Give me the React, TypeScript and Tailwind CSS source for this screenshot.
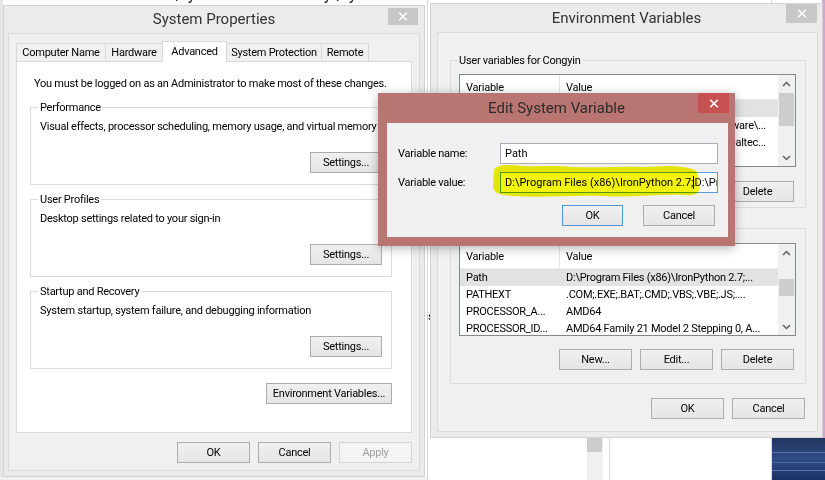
import type { ReactNode } from "react";

type Row = { name: string; value: string; tail?: boolean };

const userRows: Row[] = [
  { name: "PATH", value: "C:\\Python27\\Scripts" },
  { name: "TEMP", value: "%USERPROFILE%\\AppData\\Local\\Software\\...", tail: true },
  { name: "TMP", value: "C:\\Users\\Congyin\\AppData\\Local\\Realtec...", tail: true },
];

const systemRows: Row[] = [
  { name: "Path", value: "D:\\Program Files (x86)\\IronPython 2.7;..." },
  { name: "PATHEXT", value: ".COM;.EXE;.BAT;.CMD;.VBS;.VBE;.JS;...." },
  { name: "PROCESSOR_A...", value: "AMD64" },
  { name: "PROCESSOR_ID...", value: "AMD64 Family 21 Model 2 Stepping 0, A..." },
];

function Btn({
  children,
  className = "",
  disabled,
  focused,
}: {
  children: ReactNode;
  className?: string;
  disabled?: boolean;
  focused?: boolean;
}) {
  const tone = disabled
    ? "border-[#d5d5d5] bg-[#f4f4f4] text-[#a0a0a0]"
    : focused
      ? "border-[#4a94e0] bg-linear-to-b from-[#f0f0f0] to-[#e5e5e5]"
      : "border-[#acacac] bg-linear-to-b from-[#f0f0f0] to-[#e5e5e5]";

  return (
    <div
      className={`flex h-[21px] shrink-0 items-center justify-center border ${tone} ${className}`}
    >
      {children}
    </div>
  );
}

function CloseIcon() {
  return (
    <svg width="10" height="9" viewBox="0 0 10 9">
      <path
        d="M1.2 0.8 L8.8 8.2 M8.8 0.8 L1.2 8.2"
        stroke="#fff"
        strokeWidth="1.6"
      />
    </svg>
  );
}

function Chevron({ up }: { up?: boolean }) {
  return (
    <svg width="9" height="6" viewBox="0 0 9 6">
      <polyline
        points={up ? "1,5 4.5,1.5 8,5" : "1,1 4.5,4.5 8,1"}
        fill="none"
        stroke="#606060"
        strokeWidth="1.5"
      />
    </svg>
  );
}

function ScrollBar({ thumb }: { thumb: string }) {
  return (
    <div className="flex w-[17px] shrink-0 flex-col bg-[#f0f0f0]">
      <div className="flex h-[17px] items-center justify-center">
        <Chevron up />
      </div>
      <div className="flex-1">
        <div className={`mx-px bg-[#cdcdcd] ${thumb}`} />
      </div>
      <div className="flex h-[17px] items-center justify-center">
        <Chevron />
      </div>
    </div>
  );
}

function VarList({
  rows,
  selected,
  thumb,
}: {
  rows: Row[];
  selected: number;
  thumb: string;
}) {
  return (
    <div className="ml-[8px] flex h-[93px] w-[337px] border border-[#828790] bg-white">
      <div className="flex min-w-0 flex-1 flex-col overflow-hidden">
        <div className="flex h-[25px] shrink-0 border-b border-[#ececec]">
          <div className="flex w-[100px] items-center border-r border-[#e5e5e5] pl-[6px]">
            Variable
          </div>
          <div className="flex items-center pl-[6px]">Value</div>
        </div>

        {rows.map((row, i) => (
          <div
            key={row.name}
            className={`flex h-[17px] shrink-0 items-center ${
              i === selected ? "bg-[#e2e2e2]" : ""
            }`}
          >
            <div className="w-[100px] shrink-0 overflow-hidden whitespace-nowrap pl-[6px]">
              {row.name}
            </div>
            <div
              className={`flex min-w-0 flex-1 overflow-hidden whitespace-nowrap pl-[6px] ${
                row.tail ? "justify-end pr-[12px]" : ""
              }`}
            >
              <span className="shrink-0">{row.value}</span>
            </div>
          </div>
        ))}
      </div>
      <ScrollBar thumb={thumb} />
    </div>
  );
}

function Group({ label, text }: { label: string; text: string }) {
  return (
    <div className="relative flex h-[78px] w-[362px] flex-col border border-[#dcdcdc]">
      <span className="absolute -top-[8px] left-[7px] bg-white px-[2px]">
        {label}
      </span>
      <p className="whitespace-nowrap pl-[9px] pt-[11px]">{text}</p>
      <Btn className="mr-[9px] mt-[18px] w-[72px] self-end">Settings...</Btn>
    </div>
  );
}

function SystemProperties() {
  const tabs = [
    { label: "Computer Name", w: "w-[90px]" },
    { label: "Hardware", w: "w-[58px]" },
    { label: "Advanced", w: "w-[65px]", active: true },
    { label: "System Protection", w: "w-[96px]" },
    { label: "Remote", w: "w-[48px]" },
  ];

  return (
    <div className="absolute left-[3px] top-[5px] flex h-[472px] w-[422px] flex-col border border-[#d3d3d3] bg-[#ebebeb]">
      <div className="relative flex h-[27px] items-center justify-center text-[15px] tracking-normal text-[#333]">
        System Properties
        <div className="absolute right-[6px] top-[2px] flex h-[17px] w-[30px] items-center justify-center bg-[#c7c7c7]">
          <CloseIcon />
        </div>
      </div>

      <div className="ml-[4px] h-[438px] w-[412px] border border-[#dadada] bg-[#f0f0f0] pl-[7px] pt-[7px]">
        <div className="flex h-[20px] items-end">
          {tabs.map((tab, i) => (
            <div
              key={tab.label}
              className={`flex items-center justify-center border border-b-0 border-[#d9d9d9] ${tab.w} ${
                i > 0 ? "-ml-px" : ""
              } ${
                tab.active
                  ? "relative z-10 -mb-px h-[21px] bg-white pb-[2px]"
                  : "h-[18px] bg-[#f0f0f0]"
              }`}
            >
              {tab.label}
            </div>
          ))}
        </div>

        <div className="flex h-[372px] w-[396px] flex-col border border-[#d9d9d9] bg-white pl-[13px] pt-[14px]">
          <p className="pl-[4px]">
            You must be logged on as an Administrator to make most of these
            changes.
          </p>

          <div className="mt-[16px] flex flex-col gap-[14px]">
            <Group
              label="Performance"
              text="Visual effects, processor scheduling, memory usage, and virtual memory"
            />
            <Group
              label="User Profiles"
              text="Desktop settings related to your sign-in"
            />
            <Group
              label="Startup and Recovery"
              text="System startup, system failure, and debugging information"
            />
          </div>

          <div className="mt-[14px] flex w-[362px] justify-end">
            <Btn className="w-[126px]">Environment Variables...</Btn>
          </div>
        </div>

        <div className="mt-[9px] flex w-[396px] justify-end gap-[8px]">
          <Btn className="w-[73px]">OK</Btn>
          <Btn className="w-[73px]">Cancel</Btn>
          <Btn className="w-[73px]" disabled>
            Apply
          </Btn>
        </div>
      </div>
    </div>
  );
}

function EnvironmentVariables() {
  return (
    <div className="absolute left-[430px] top-[3px] flex h-[435px] w-[393px] flex-col border border-[#d3d3d3] bg-[#ebebeb]">
      <div className="relative flex h-[28px] items-center justify-center text-[15px] tracking-normal text-[#333]">
        Environment Variables
        <div className="absolute right-[5px] top-0 flex h-[19px] w-[31px] items-center justify-center bg-[#c7c7c7]">
          <CloseIcon />
        </div>
      </div>

      <div className="ml-[6px] h-[400px] w-[381px] border border-[#dadada] bg-[#f0f0f0]">
        <div className="relative ml-[12px] mt-[27px] h-[148px] w-[356px] border border-[#dcdcdc]">
          <span className="absolute -top-[8px] left-[6px] bg-[#f0f0f0] px-[2px]">
            User variables for Congyin
          </span>
          <div className="pt-[13px]">
            <VarList rows={userRows} selected={0} thumb="mt-px h-[33px]" />
          </div>
          <div className="ml-[8px] mt-[14px] flex w-[337px] justify-end gap-[8px] pr-[2px]">
            <Btn className="w-[73px]">New...</Btn>
            <Btn className="w-[73px]">Edit...</Btn>
            <Btn className="w-[73px]">Delete</Btn>
          </div>
        </div>

        <div className="relative ml-[12px] mt-[20px] h-[156px] w-[356px] border border-[#dcdcdc]">
          <span className="absolute -top-[8px] left-[6px] bg-[#f0f0f0] px-[2px]">
            System variables
          </span>
          <div className="pt-[14px]">
            <VarList rows={systemRows} selected={0} thumb="mt-[18px] h-[17px]" />
          </div>
          <div className="ml-[8px] mt-[13px] flex w-[337px] justify-end gap-[8px] pr-[2px]">
            <Btn className="w-[73px]">New...</Btn>
            <Btn className="w-[73px]">Edit...</Btn>
            <Btn className="w-[73px]">Delete</Btn>
          </div>
        </div>

        <div className="mt-[14px] flex justify-end gap-[8px] pr-[12px]">
          <Btn className="w-[73px]">OK</Btn>
          <Btn className="w-[73px]">Cancel</Btn>
        </div>
      </div>
    </div>
  );
}

function EditSystemVariable() {
  return (
    <div className="absolute left-[378px] top-[93px] z-20 flex h-[153px] w-[357px] flex-col bg-[#b97572] shadow-[0_2px_10px_rgba(0,0,0,0.3)]">
      <div className="relative flex h-[30px] items-center justify-center text-[15px] tracking-normal text-[#2b2b2b]">
        Edit System Variable
        <div className="absolute right-[6px] top-0 flex h-[20px] w-[31px] items-center justify-center bg-[#c75050]">
          <CloseIcon />
        </div>
      </div>

      <div className="ml-[9px] h-[114px] w-[341px] bg-[#f0f0f0]">
        <div className="grid grid-cols-[102px_218px] gap-y-[8px] pl-[11px] pt-[20px]">
          <div className="flex h-[21px] items-center">Variable name:</div>
          <div className="flex h-[21px] items-center border border-[#abadb3] bg-white pl-[4px] tracking-normal">
            Path
          </div>
          <div className="flex h-[21px] items-center">Variable value:</div>
          <div className="flex h-[21px] items-center overflow-hidden whitespace-nowrap border border-[#569de5] bg-white pl-[4px] tracking-normal">
            <span className="shrink-0">D:\Program Files (x86)\IronPython 2.7;</span>
            <span className="h-[13px] w-px shrink-0 bg-black" />
            <span className="shrink-0">D:\Program Files (x86)\Python</span>
          </div>
        </div>

        <div className="mt-[12px] flex justify-end gap-[20px] pr-[13px]">
          <Btn className="w-[61px]" focused>
            OK
          </Btn>
          <Btn className="w-[72px]">Cancel</Btn>
        </div>
      </div>
    </div>
  );
}

function Highlight() {
  return (
    <svg
      className="absolute left-[492px] top-[164px] z-30 mix-blend-multiply"
      width="212"
      height="35"
      viewBox="0 0 212 35"
    >
      <path
        d="M2 6 C4 1, 14 0, 30 2 C48 3, 60 1, 80 3 C110 4, 130 2, 150 3 C165 3, 175 1, 190 3 C200 4, 205 6, 206 11 L207 25 C207 30, 201 32, 192 31 C165 30, 140 34, 110 32 C80 31, 50 34, 22 32 C8 31, 2 30, 1 22 Z"
        fill="#f4f40a"
      />
    </svg>
  );
}

export default function App() {
  return (
    <div className="relative h-[480px] w-[825px] overflow-hidden bg-white text-[11px] leading-[15px] tracking-[-0.25px] text-black [font-family:Roboto,sans-serif]">
      {/* windows behind */}
      <div className="absolute -top-[13px] left-[69px] whitespace-nowrap text-[17px] tracking-normal text-[#222]">
        Control Panel\System and Security\System
      </div>
      <div className="absolute bottom-0 left-0 top-0 w-[3px] bg-[#e6e6e6]" />
      <div className="absolute bottom-0 left-0 h-[3px] w-[427px] bg-[#f0f0f0]" />
      <div className="absolute bottom-0 left-[427px] top-0 w-px bg-[#dadada]" />
      <span className="absolute left-[428px] top-[309px] text-[11px]">s</span>
      <div className="absolute bottom-0 left-[587px] top-[438px] w-[16px] bg-[#f0f0f0]">
        <div className="h-[14px] w-[15px] bg-[#cdcdcd]" />
      </div>
      <div className="absolute bottom-0 left-[609px] top-[438px] w-px bg-[#dadada]" />
      <div className="absolute bottom-0 left-[771px] top-0 w-px bg-[#dadada]" />
      <div className="absolute right-0 top-0 h-[438px] w-[3px] bg-[#cfa9cb]" />
      <div className="absolute bottom-0 left-[772px] right-0 top-[438px] bg-linear-to-b from-[#22365f] via-[#2f4c86] to-[#1d3266]">
        <div className="mt-[14px] h-px bg-[#5a76b0]" />
        <div className="mt-[9px] h-px bg-[#4a66a0]" />
        <div className="mt-[7px] h-px bg-[#5a76b0]" />
      </div>

      <SystemProperties />
      <EnvironmentVariables />
      <EditSystemVariable />
      <Highlight />
    </div>
  );
}
